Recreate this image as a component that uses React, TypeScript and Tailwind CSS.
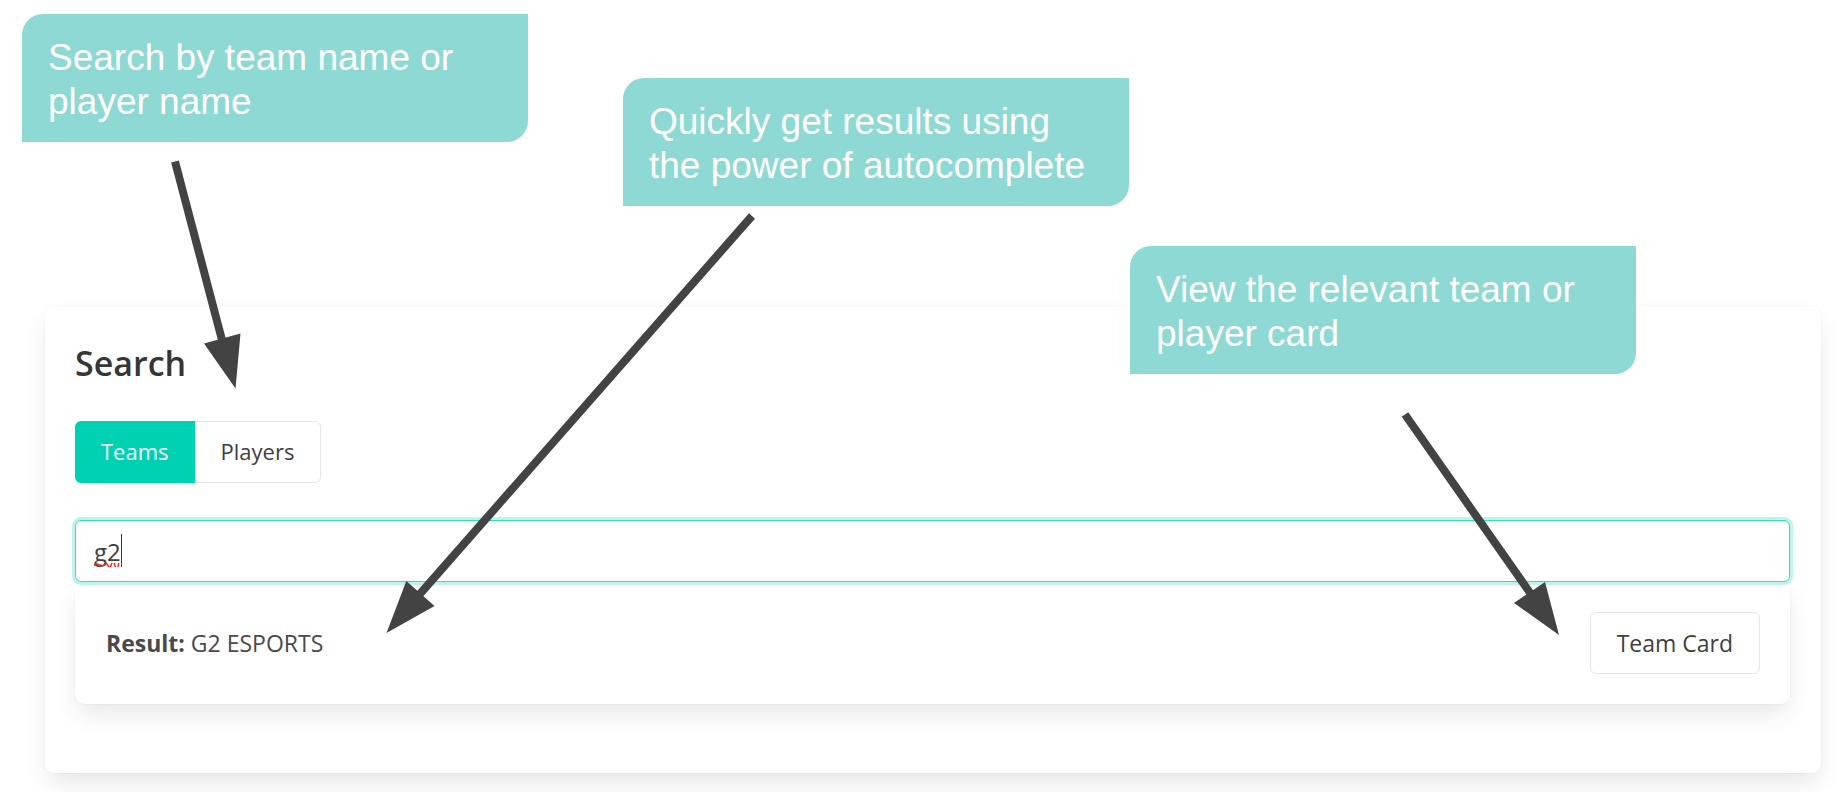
import { useState } from "react";

const callouts = [
  { text: "Search by team name or player name", place: "left-[22px] top-[14px]" },
  { text: "Quickly get results using the power of autocomplete", place: "left-[623px] top-[78px]" },
  { text: "View the relevant team or player card", place: "left-[1130px] top-[246px]" },
];

const arrows = [
  { shaft: "M175 161.500L222 340", head: "204,343.500 240.500,333.500 235.500,388.500" },
  { shaft: "M752 216L419 595", head: "406.300,581 434.500,606 386.500,633" },
  { shaft: "M1405 414.500L1530.500 593.500", head: "1545,582 1514,603 1559,635" },
];

const shadow =
  "shadow-[0_12px_24px_-3px_rgba(10,10,10,0.1),0_0_0_1px_rgba(10,10,10,0.02)]";

export default function App() {
  const [query, setQuery] = useState("g2");
  const [mode, setMode] = useState("teams");

  return (
    <div className="relative overflow-hidden bg-white font-['Open_Sans','Noto_Sans',sans-serif] text-2xl text-[#404040]">
      <main className="overflow-hidden pt-[306px] pr-[23px] pb-[19px] pl-[45px]">
        <section className={`rounded-[9px] bg-white pt-[30px] pr-[31px] pb-[69px] pl-[30px] ${shadow}`}>
          <h1 className="text-[34px] leading-[54px] font-semibold text-[#363636]">Search</h1>
          <div className="mt-[31px] flex">
            <button
              type="button"
              aria-pressed={mode === "teams"}
              onClick={() => setMode("teams")}
              className="h-[62px] rounded-l-[6px] bg-[#00d1b2] px-[26px] text-[22px] text-white"
            >
              Teams
            </button>
            <button
              type="button"
              aria-pressed={mode === "players"}
              onClick={() => setMode("players")}
              className="h-[62px] rounded-r-[6px] border border-l-0 border-[#e6e6e6] bg-white px-[26px] text-[22px]"
            >
              Players
            </button>
          </div>
          <div className="relative z-10 mt-[37px]">
            <input
              type="text"
              aria-label="Team name"
              spellCheck={false}
              value={query}
              onChange={(e) => setQuery(e.target.value)}
              className="block h-[62px] w-full rounded-[6px] border border-[#35dcc4] bg-white px-[18px] text-2xl shadow-[0_0_0_3px_rgba(0,209,178,0.25)] outline-none"
            />
            <span className="absolute top-[14px] left-[46px] h-[33px] w-px bg-[#363636]" />
            <svg
              aria-hidden="true"
              className="absolute top-[43px] left-[19px] h-[4px] w-[28px]"
              viewBox="0 0 28 4"
              fill="none"
              stroke="#ff1a1a"
              strokeWidth="1.400"
            >
              <path d="M0 2.500Q2 .5 3.500 1T7 2.500T10.500 1T14 2.500T17.500 1T21 2.500T24.500 1T28 2.500" />
            </svg>
          </div>
          <div className={`flex items-center justify-between rounded-[9px] bg-white p-[30px] ${shadow}`}>
            <p className="pl-px text-[23px] text-[#4a4a4a]">
              <strong className="font-bold">Result:</strong> G2 ESPORTS
            </p>
            <button
              type="button"
              className="h-[62px] rounded-[6px] border border-[#e6e6e6] bg-white px-[26px] text-[23px]"
            >
              Team Card
            </button>
          </div>
        </section>
      </main>

      {callouts.map((c) => (
        <p
          key={c.text}
          className={`absolute z-20 w-[506px] rounded-tl-[21px] rounded-br-[21px] bg-[#8ed9d3] pt-[22px] pr-[24px] pb-[18px] pl-[26px] font-['Liberation_Sans',Arial,sans-serif] text-[37px] leading-[44px] text-white ${c.place}`}
        >
          {c.text}
        </p>
      ))}

      <svg
        aria-hidden="true"
        className="pointer-events-none absolute top-0 left-0 z-30 h-[812px] w-[1844px]"
        viewBox="0 0 1844 812"
      >
        {arrows.map((a) => (
          <g key={a.shaft} fill="#434343">
            <path d={a.shaft} stroke="#434343" strokeWidth="8" />
            <polygon points={a.head} />
          </g>
        ))}
      </svg>
    </div>
  );
}
